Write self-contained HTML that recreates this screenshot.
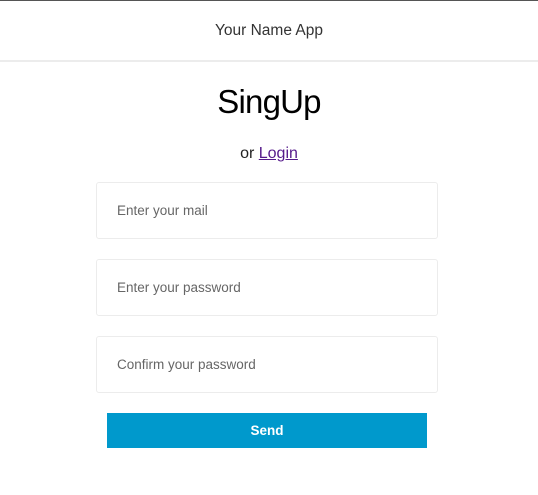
<!DOCTYPE html>
<html><head><style>
*{box-sizing:border-box;margin:0;padding:0}
body{width:538px;height:495px;background:#fff;font-family:"Liberation Sans",sans-serif;position:relative;overflow:hidden}
.top{position:absolute;top:0;left:0;width:538px;height:1px;background:#555}
.hdr{position:absolute;top:1px;left:0;width:538px;height:61px;border-bottom:2px solid #ececec;text-align:center;line-height:60px;font-size:15.5px;color:#333}
h1{position:absolute;top:83px;left:0;width:538px;text-align:center;font-size:33px;font-weight:normal;color:#000;letter-spacing:-0.8px}
.or{position:absolute;top:145px;left:0;width:538px;text-align:center;font-size:16px;color:#222}
.or a{color:#551a8b;text-decoration:underline}
.in{position:absolute;left:96px;width:342px;height:57px;border:1px solid #ececec;border-radius:3px;font-size:13.5px;color:#666;padding-left:20px;line-height:55px}
.btn{position:absolute;left:107px;top:413px;width:320px;height:35px;background:#0099cc;color:#fff;text-align:center;line-height:35px;font-size:13.5px;font-weight:bold}
</style></head><body>
<div class="top"></div>
<div class="hdr">Your Name App</div>
<h1>SingUp</h1>
<div class="or">or <a>Login</a></div>
<div class="in" style="top:182px">Enter your mail</div>
<div class="in" style="top:259px">Enter your password</div>
<div class="in" style="top:336px">Confirm your password</div>
<div class="btn">Send</div>
</body></html>
